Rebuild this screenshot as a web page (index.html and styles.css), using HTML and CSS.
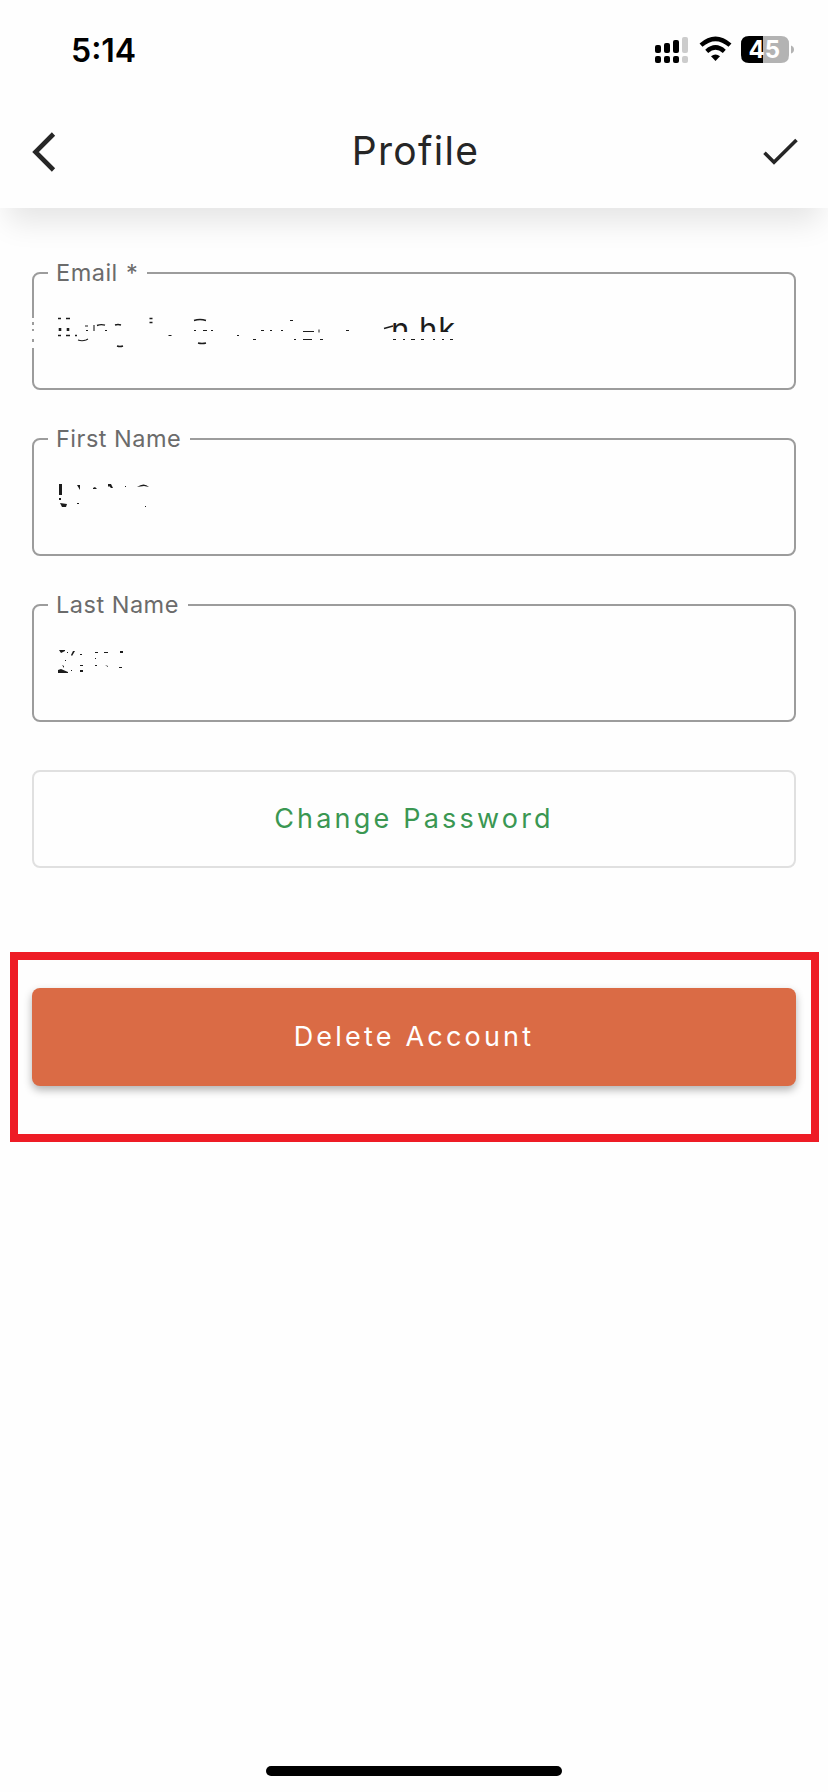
FILE: index.html
```html
<!DOCTYPE html>
<html lang="en">
<head>
<meta charset="utf-8">
<title>Profile</title>
<link rel="stylesheet" href="styles.css">
</head>
<body>
<div class="screen">
  <header class="header">
    <div class="status">
      <span class="time">5:14</span>
      <svg class="status-icons" width="142" height="28" viewBox="654 35 142 28">
        <g fill="#000">
          <rect x="655" y="45" width="6" height="8" rx="2"/><rect x="664" y="43" width="6" height="10" rx="2"/><rect x="673" y="40" width="6" height="13" rx="2"/>
          <rect x="655" y="56" width="6" height="7" rx="2"/><rect x="664" y="56" width="6" height="7" rx="2"/><rect x="673" y="56" width="6" height="7" rx="2"/>
        </g>
        <g fill="#ccc"><rect x="682" y="37" width="6" height="16" rx="2"/><rect x="682" y="56" width="6" height="7" rx="2"/></g>
        <g fill="none" stroke="#000" stroke-width="4.4"><path d="M701 45.2Q715.500 32.500 730 45.200"/><path d="M706.700 51.300Q715.500 43.500 724.300 51.300"/></g>
        <path d="M711 56.300Q715.500 52.800 720 56.300L715.500 61Z"/>
        <path d="M749 36H763V63H749Q741 63 741 55V44Q741 36 749 36Z"/>
        <path d="M763 36H781Q789 36 789 44V55Q789 63 781 63H763Z" fill="#b3b3b3"/>
        <path d="M791 45.500Q794 46.500 794 49.500T791 53.500Z" fill="#b3b3b3"/>
        <text class="battery-text" x="748.500" y="57.600">45</text>
      </svg>
    </div>
    <div class="appbar">
      <svg class="back" width="26" height="42" viewBox="31 131 26 42"><path d="M53.500 134L35.500 152L53.500 170" fill="none" stroke="#262626" stroke-width="4.600"/></svg>
      <h1 class="title">Profile</h1>
      <svg class="check" width="38" height="30" viewBox="762 138 38 30"><path d="M764.500 153.800L774 163.300L796.500 141" fill="none" stroke="#262626" stroke-width="3.600"/></svg>
    </div>
  </header>
  <main class="form">
    <fieldset class="field">
      <legend class="label label-email">Email *</legend>
      <svg class="value" width="764" height="118" viewBox="32 272 764 118">
        <defs><clipPath id="tail"><path d="M383 326L400 320V315H470V331H383Z"/></clipPath></defs>
        <rect x="31" y="316" width="4" height="31" fill="#fefefe"/>
        <path d="M33 316v1m0 4v3m0 4v2m0 8v3" stroke="#9c9c9c" stroke-width="2"/>
        <g fill="none" stroke="#1c1c1c">
          <path d="M58 317.500h3m5 0h4M58 334.500h3m5 0h4m5 0h2" stroke-width="1.300"/>
          <path d="M60 327v3m8-3v3" stroke-width="2.600"/>
          <path d="M97 324.500q4-1.500 8-.3M115 324q3-1 6 0M149.500 317.500h3m-3 4h3M194 319.500q6-2 12 0M198 342q4 1 8 0M117 345q3 1 6 0" stroke-width="1.400"/>
          <path d="M94 324v6M85 325h3m-2 4.500h2m17 0h2M78 339q4 1.500 8 0l2-1M168.500 334.500h3M194 329.500h2m7 0h4m4 0h2" stroke-width="1.100"/>
          <path d="M261 329.500h3m6 0h2m9 0h2M290 319.500h3M303 330.500h11m5 1v-3M346 329.500h3M253 338.500h3m38 0h2m7 0h9m8 0h3M237 334.500h2"/>
        </g>
        <path d="M393 338.500h3m7 0h2m6 0h4m6 0h3m9 0h2m7 0h2m6 0h3" stroke="#1c1c1c"/>
        <text class="value-text" x="391" y="339" clip-path="url(#tail)">n<tspan x="419">hk</tspan></text>
        <path d="M384 327.500l9-2.500" stroke="#1c1c1c" stroke-width="1.300"/>
      </svg>
    </fieldset>
    <fieldset class="field">
      <legend class="label">First Name</legend>
      <svg class="value" width="764" height="118" viewBox="32 438 764 118">
        <g fill="#1c1c1c">
          <path d="M59 483h3v11h-3zM59 497h2v2h-2zM60 502l7 1-1 3h-4zM77 484h3v5zM77 502h2v1h-2zM93 487l2-1 2 2h-4zM108 483h3l2 4h-2l-2-2-1 1zM125 485h1v1h-1zM137 486q7-5 12 0l-5-1zM145 505h1v1h-1z"/>
        </g>
      </svg>
    </fieldset>
    <fieldset class="field">
      <legend class="label">Last Name</legend>
      <svg class="value" width="764" height="118" viewBox="32 604 764 118">
        <g fill="#1c1c1c">
          <path d="M59 649h6v1l-4 2zM67 651h1v1h-1zM71 654l2-4h2l-3 5zM80 653h2v1h-2zM95 651h3v1h-3zM104 651h4v1h-4zM120 650h3v2h-3zM65 659h1v1h-1zM95 657h1v1h-1zM62 664l2 1v2zM80 664h3v1h-3zM95 664h2v1h-2zM105 664l3 1v1zM119 666h3v1h-3zM58 669l3-1 7 3v1H58zM71 669h1v1h-1zM80 669h3v2h-3z"/>
        </g>
      </svg>
    </fieldset>
    <button class="btn btn-outline">Change Password</button>
  </main>
  <section class="highlight"><button class="btn btn-delete">Delete Account</button></section>
  <div class="home"></div>
</div>
</body>
</html>
```
FILE: styles.css
```css
* { box-sizing: border-box; }
body { margin: 0; background: #fefefe; font-family: Inter, Roboto, sans-serif; }
.screen { width: 828px; height: 1792px; display: flex; flex-direction: column; background: #fefefe; overflow: hidden; }
.header { height: 208px; flex: none; background: #fefefe; box-shadow: 0 22px 28px -8px rgba(0, 0, 0, .1); }
.status { height: 98px; padding: 0 32px 0 71px; display: flex; align-items: center; justify-content: space-between; }
.time { padding-top: 3px; font-size: 32px; font-weight: 600; line-height: 40px; color: #000; }
.battery-text { font-size: 24px; font-weight: 700; fill: #fff; }
.appbar { height: 108px; padding: 0 28px 0 31px; display: grid; grid-template-columns: 38px 1fr 38px; align-items: center; }
.title { margin: 0; padding-bottom: 2px; text-align: center; font-size: 39px; font-weight: 400; line-height: 48px; letter-spacing: 1.3px; color: #262626; }
.form { padding: 50px 32px 0; display: flex; flex-direction: column; }
.field { margin: 0 0 34px; padding: 0 0 0 14px; height: 132px; min-width: 0; border: 2px solid #9c9c9c; border-radius: 8px; }
.label { padding: 0 9px 0 8px; font-size: 23.5px; line-height: 30px; letter-spacing: .5px; color: #6b6b6b; }
.label-email { word-spacing: 1px; }
.value { display: block; margin: -15px 0 0 -16px; overflow: visible; }
.value-text { font-size: 31px; fill: #1c1c1c; letter-spacing: 1px; }
.btn { width: 764px; height: 98px; padding: 0; border-radius: 8px; font-family: inherit; font-size: 27px; font-weight: 400; line-height: 36px; letter-spacing: 3.2px; }
.btn-outline { margin-top: 14px; border: 2px solid #e0e0e0; background: #fefefe; color: #3a9752; }
.highlight { width: 809px; height: 190px; margin: 84px 0 0 10px; padding: 28px 14px; border: 8px solid #ee1c25; background: #fefefe; }
.btn-delete { border: 0; background: #da6b45; color: #fff; box-shadow: 0 4px 8px rgba(0, 0, 0, .3); }
.home { width: 296px; height: 10px; margin: auto auto 16px; border-radius: 5px; background: #000; }
```
